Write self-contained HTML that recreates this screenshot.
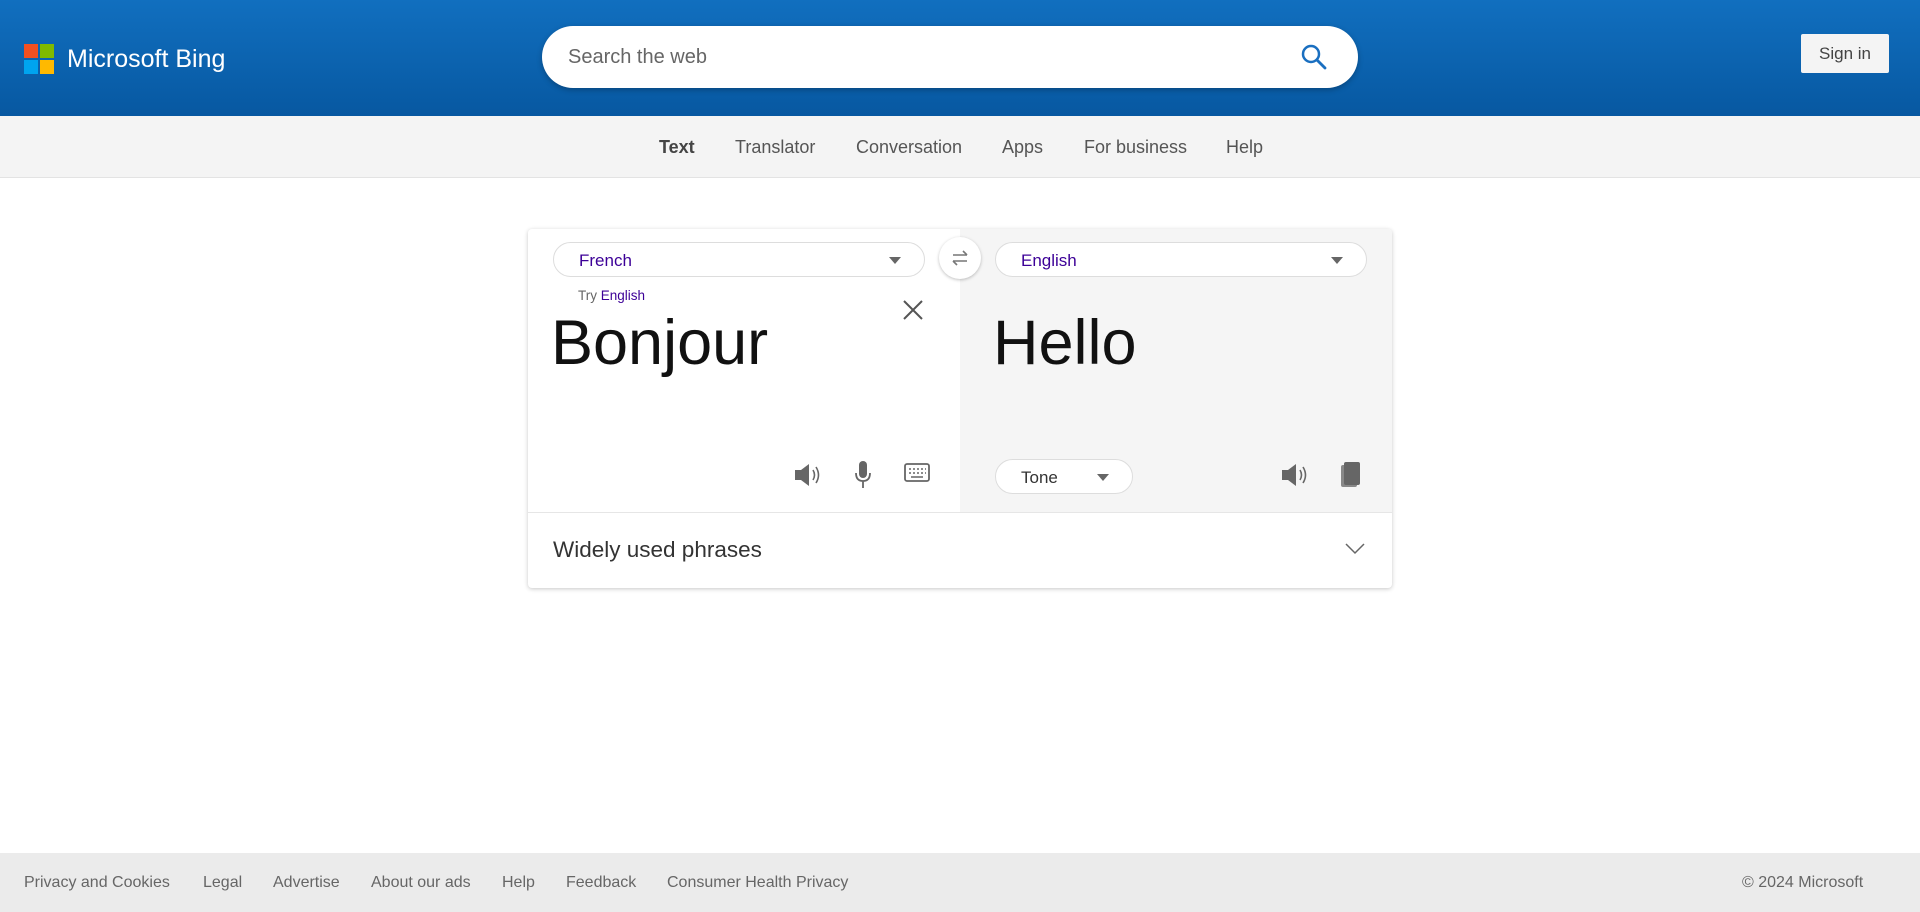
<!DOCTYPE html>
<html><head><meta charset="utf-8"><style>
*{box-sizing:border-box;margin:0;padding:0}
body{width:1920px;height:912px;overflow:hidden;font-family:"Liberation Sans",Arial,sans-serif;background:#fff;position:relative}
.hdr{position:absolute;left:0;top:0;width:1920px;height:116px;background:linear-gradient(#116fbf,#0758a1)}
.abs{position:absolute}
.nav{position:absolute;top:116px;left:0;width:1920px;height:62px;background:#f4f4f4;border-bottom:1px solid #e3e3e3}
.nav span{position:absolute;top:21px;font-size:18px;color:#555}
.card{position:absolute;left:528px;top:229px;width:864px;height:359px;background:#fff;border-radius:4px;box-shadow:0 1px 4px rgba(0,0,0,.22)}
.dd{position:absolute;height:35px;border:1px solid #ddd;border-radius:18px;background:#fff;font-size:17px;color:#3c0097;padding:8px 0 0 25px}
.tri{position:absolute;right:23px;top:14px;width:0;height:0;border-left:6px solid transparent;border-right:6px solid transparent;border-top:7px solid #666}
.foot{position:absolute;left:0;top:853px;width:1920px;height:59px;background:#ebebeb}
.foot span{position:absolute;top:21px;font-size:16px;color:#666}
</style></head><body>
<div class="hdr">
 <div class="abs" style="left:24px;top:44px;width:14px;height:14px;background:#f25022"></div>
 <div class="abs" style="left:40px;top:44px;width:14px;height:14px;background:#7fba00"></div>
 <div class="abs" style="left:24px;top:60px;width:14px;height:14px;background:#00a4ef"></div>
 <div class="abs" style="left:40px;top:60px;width:14px;height:14px;background:#ffb900"></div>
 <div class="abs" style="left:67px;top:45px;font-size:25px;color:#fff">Microsoft Bing</div>
 <div class="abs" style="left:542px;top:26px;width:816px;height:62px;background:#fff;border-radius:31px;box-shadow:0 2px 6px rgba(0,0,0,.25)">
  <div class="abs" style="left:26px;top:20px;font-size:20px;color:#666">Search the web</div>
  <svg class="abs" style="left:758px;top:17px" width="28" height="28" viewBox="0 0 28 28"><circle cx="11" cy="11" r="8" fill="none" stroke="#1a6fc0" stroke-width="2.5"/><path d="M17 17l8 8" stroke="#1a6fc0" stroke-width="2.8" stroke-linecap="round"/></svg>
 </div>
 <div class="abs" style="left:1801px;top:34px;width:88px;height:39px;background:#f4f4f4;border-radius:2px;font-size:17px;color:#444;text-align:center;line-height:39px">Sign in</div>
</div>
<div class="nav">
 <span style="left:659px;font-weight:bold;color:#444">Text</span>
 <span style="left:735px">Translator</span>
 <span style="left:856px">Conversation</span>
 <span style="left:1002px">Apps</span>
 <span style="left:1084px">For business</span>
 <span style="left:1226px">Help</span>
</div>
<div class="card">
 <div class="abs" style="left:432px;top:0;width:432px;height:283px;background:#f5f5f5;border-top-right-radius:4px"></div>
 <div class="abs" style="left:0;top:283px;width:864px;height:1px;background:#e6e6e6"></div>
 <div class="dd" style="left:25px;top:13px;width:372px">French<div class="tri"></div></div>
 <div class="dd" style="left:467px;top:13px;width:372px">English<div class="tri"></div></div>
 <div class="abs" style="left:411px;top:8px;width:42px;height:42px;border-radius:50%;background:#fff;box-shadow:0 1px 3px rgba(0,0,0,.25)">
  <svg class="abs" style="left:11px;top:11px" width="20" height="20" viewBox="0 0 20 20" fill="none" stroke="#777" stroke-width="1.6"><path d="M3 7h14M13 3l4 4M17 13H3M7 17l-4-4"/></svg>
 </div>
 <div class="abs" style="left:50px;top:59px;font-size:13.5px;color:#666">Try <span style="color:#3c0097">English</span></div>
 <svg class="abs" style="left:374px;top:70px" width="22" height="22" viewBox="0 0 22 22"><path d="M2 2l18 18M20 2L2 20" stroke="#555" stroke-width="2"/></svg>
 <div class="abs" style="left:23px;top:78px;font-size:63px;color:#111">Bonjour</div>
 <div class="abs" style="left:465px;top:78px;font-size:63px;color:#111">Hello</div>
 <svg class="abs" style="left:265px;top:233px" width="28" height="26" viewBox="0 0 28 26"><path d="M2 8h6l8-6v22l-8-6H2z" fill="#666"/><path d="M20 8q3 5 0 10M23 5q5 8 0 16" stroke="#666" stroke-width="1.6" fill="none"/></svg>
 <svg class="abs" style="left:325px;top:231px" width="20" height="30" viewBox="0 0 20 30"><rect x="6" y="1" width="8" height="17" rx="4" fill="#666"/><path d="M3 13q0 8 7 8t7-8M10 21v7" stroke="#666" stroke-width="1.8" fill="none"/></svg>
 <svg class="abs" style="left:376px;top:234px" width="26" height="20" viewBox="0 0 26 20"><rect x="1" y="1" width="24" height="17" rx="2" fill="none" stroke="#666" stroke-width="1.8"/><path d="M5 6h2M9 6h2M13 6h2M17 6h2M21 6h1M5 10h2M9 10h2M13 10h2M17 10h2M21 10h1M7 14h12" stroke="#666" stroke-width="1.6"/></svg>
 <div class="dd" style="left:467px;top:230px;width:138px;color:#333">Tone<div class="tri"></div></div>
 <svg class="abs" style="left:752px;top:233px" width="28" height="26" viewBox="0 0 28 26"><path d="M2 8h6l8-6v22l-8-6H2z" fill="#666"/><path d="M20 8q3 5 0 10M23 5q5 8 0 16" stroke="#666" stroke-width="1.6" fill="none"/></svg>
 <svg class="abs" style="left:811px;top:232px" width="22" height="28" viewBox="0 0 22 28"><rect x="2" y="4" width="16" height="22" rx="2" fill="#888"/><rect x="5" y="1" width="16" height="23" rx="2" fill="#666"/></svg>
 <div class="abs" style="left:25px;top:308px;font-size:22.5px;color:#333">Widely used phrases</div>
 <svg class="abs" style="left:817px;top:314px" width="20" height="12" viewBox="0 0 20 12"><path d="M1 1l9 9 9-9" stroke="#666" stroke-width="1.5" fill="none"/></svg>
</div>
<div class="foot">
 <span style="left:24px">Privacy and Cookies</span>
 <span style="left:203px">Legal</span>
 <span style="left:273px">Advertise</span>
 <span style="left:371px">About our ads</span>
 <span style="left:502px">Help</span>
 <span style="left:566px">Feedback</span>
 <span style="left:667px">Consumer Health Privacy</span>
 <span style="left:1742px">© 2024 Microsoft</span>
</div>
</body></html>
